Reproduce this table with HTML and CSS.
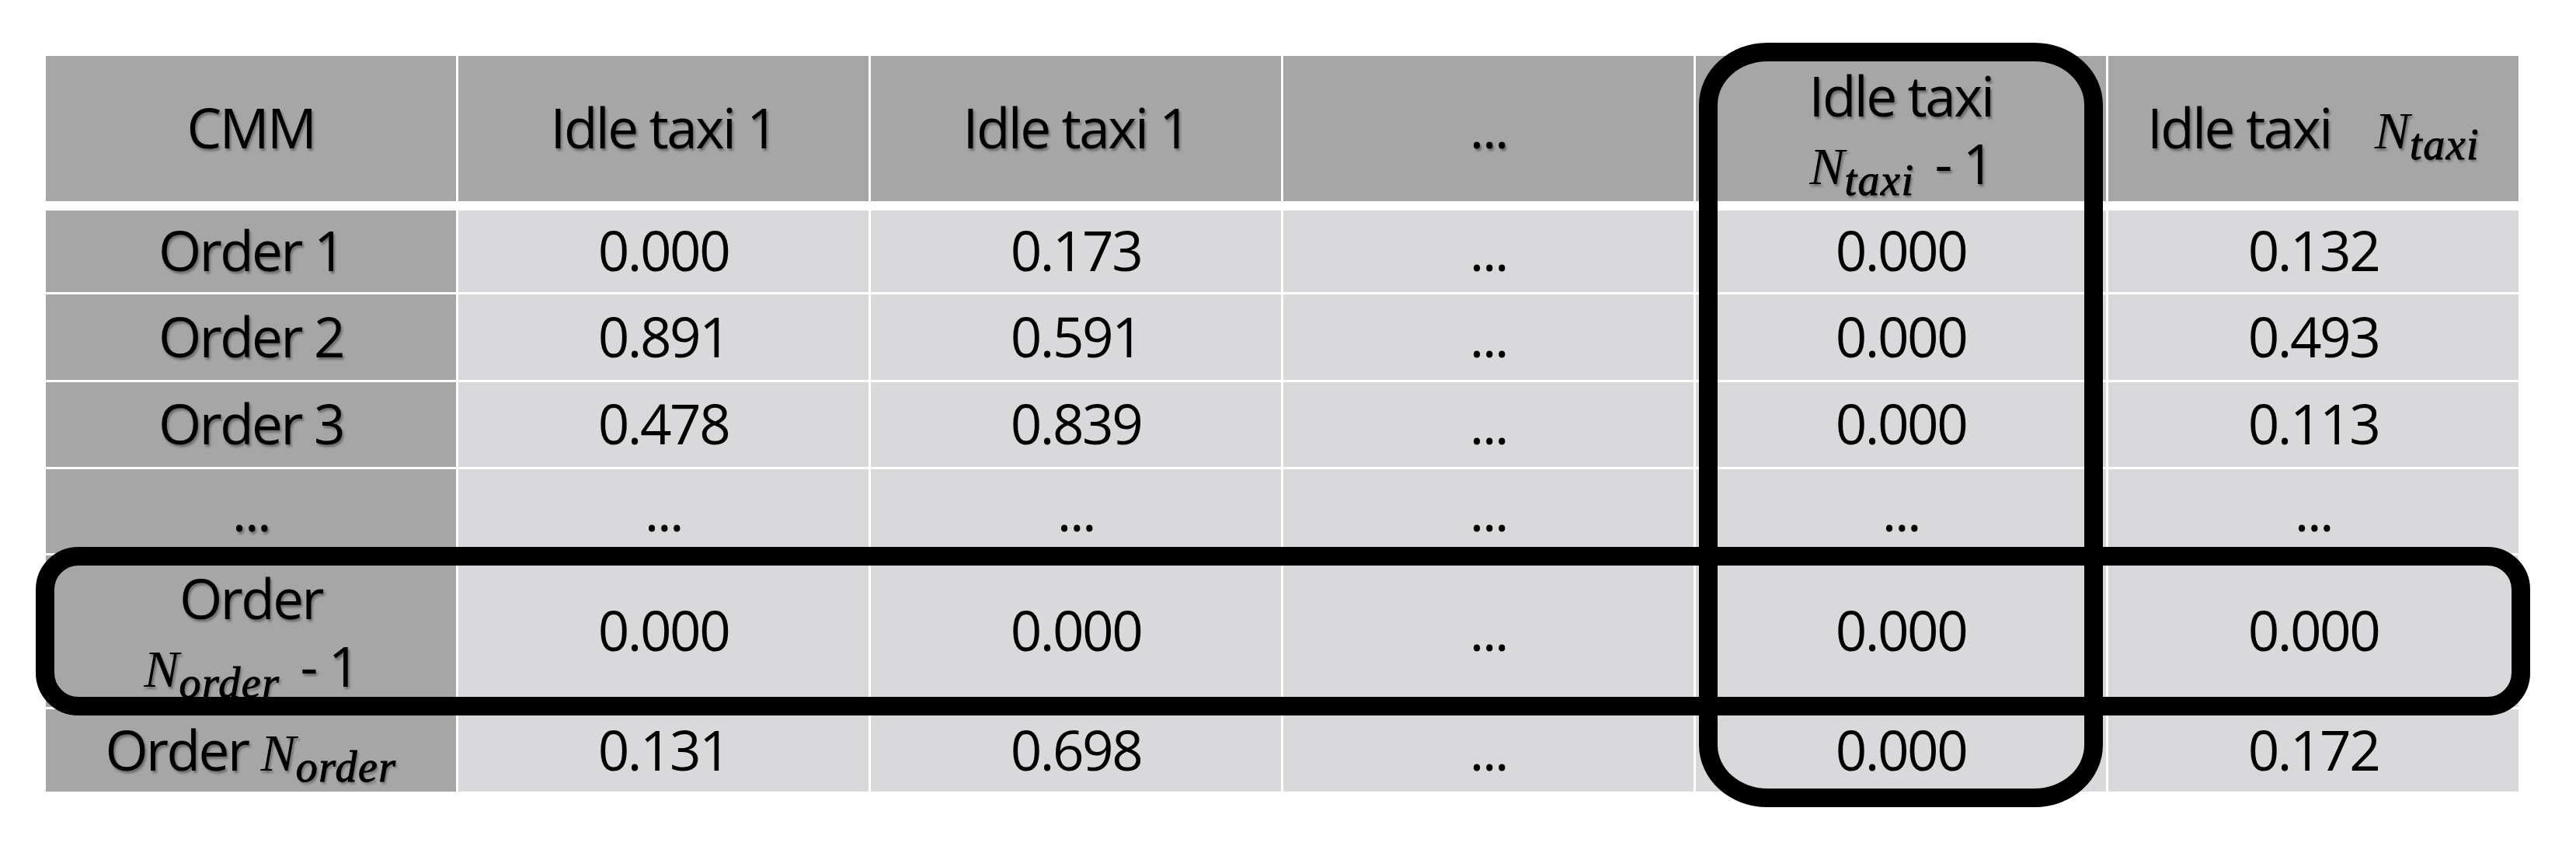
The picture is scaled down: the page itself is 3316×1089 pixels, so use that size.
FILE: index.html
```html
<!DOCTYPE html>
<html lang="en">
<head>
<meta charset="utf-8">
<title>CMM table</title>
<link rel="stylesheet" href="styles.css">
</head>
<body>
<div class="stage">
  <div class="thead">
    <div class="cell dark">CMM</div>
    <div class="cell dark">Idle taxi 1</div>
    <div class="cell dark">Idle taxi 1</div>
    <div class="cell dark">...</div>
    <div class="cell dark two">
      <span class="line">Idle taxi</span>
      <span class="line"><span class="m">N</span><span class="sub">taxi</span> - 1</span>
    </div>
    <div class="cell dark"><span class="line">Idle taxi <span class="m gap">N</span><span class="sub end">taxi</span></span></div>
  </div>
  <div class="tbody">
    <div class="cell dark">Order 1</div>
    <div class="cell">0.000</div>
    <div class="cell">0.173</div>
    <div class="cell">...</div>
    <div class="cell">0.000</div>
    <div class="cell">0.132</div>

    <div class="cell dark">Order 2</div>
    <div class="cell">0.891</div>
    <div class="cell">0.591</div>
    <div class="cell">...</div>
    <div class="cell">0.000</div>
    <div class="cell">0.493</div>

    <div class="cell dark">Order 3</div>
    <div class="cell">0.478</div>
    <div class="cell">0.839</div>
    <div class="cell">...</div>
    <div class="cell">0.000</div>
    <div class="cell">0.113</div>

    <div class="cell dark">...</div>
    <div class="cell">...</div>
    <div class="cell">...</div>
    <div class="cell">...</div>
    <div class="cell">...</div>
    <div class="cell">...</div>

    <div class="cell dark two">
      <span class="line">Order</span>
      <span class="line"><span class="m">N</span><span class="sub">order</span> - 1</span>
    </div>
    <div class="cell">0.000</div>
    <div class="cell">0.000</div>
    <div class="cell">...</div>
    <div class="cell">0.000</div>
    <div class="cell">0.000</div>

    <div class="cell dark"><span class="line">Order <span class="m">N</span><span class="sub end">order</span></span></div>
    <div class="cell">0.131</div>
    <div class="cell">0.698</div>
    <div class="cell">...</div>
    <div class="cell">0.000</div>
    <div class="cell">0.172</div>
  </div>

  <div class="box box-row"></div>
  <div class="box box-col"></div>
</div>
</body>
</html>
```
FILE: styles.css
```css
html, body {
  margin: 0;
  padding: 0;
  background: #ffffff;
}

body {
  font-family: "Open Sans", "Noto Sans", sans-serif;
  color: #000;
}

.stage {
  position: relative;
  width: 3316px;
  height: 1089px;
  box-sizing: border-box;
  padding: 72px 0 0 59px;
  overflow: hidden;
}

.thead,
.tbody {
  display: grid;
  grid-template-columns: repeat(6, 528px);
  column-gap: 3px;
}

.thead {
  grid-template-rows: 187px;
  margin-bottom: 12px;
}

.tbody {
  grid-template-rows: 105px 110px 109px 108px 195px 106px;
  row-gap: 3px;
}

.cell {
  display: flex;
  flex-direction: column;
  align-items: center;
  justify-content: center;
  text-align: center;
  background: #d9d9db;
  font-size: 71px;
  line-height: 87px;
  letter-spacing: -2.5px;
  white-space: nowrap;
  padding-bottom: 4px;
  box-sizing: border-box;
}

.cell.two {
  padding-bottom: 0;
}

.dark {
  background: #a6a6a6;
  text-shadow: 2px 3px 3px rgba(0, 0, 0, 0.35);
}

.line {
  display: block;
  line-height: 87px;
  height: 87px;
}

.m {
  font-family: "Liberation Serif", "DejaVu Serif", serif;
  font-style: italic;
  font-size: 68px;
  letter-spacing: 0;
}

.m.gap {
  margin-left: 40px;
}

.sub {
  font-family: "Liberation Serif", "DejaVu Serif", serif;
  font-style: italic;
  font-size: 56px;
  letter-spacing: 1.5px;
  vertical-align: -14px;
  line-height: 1;
  margin-right: 10px;
  -webkit-text-stroke: 1px #000;
}

.sub.end {
  margin-right: 0;
}

.box {
  position: absolute;
  border: 24px solid #000;
  box-sizing: border-box;
}

.box-row {
  left: 46px;
  top: 704px;
  width: 3211px;
  height: 217px;
  border-radius: 55px;
}

.box-col {
  left: 2187px;
  top: 55px;
  width: 520px;
  height: 984px;
  border-radius: 88px / 80px;
}
```
